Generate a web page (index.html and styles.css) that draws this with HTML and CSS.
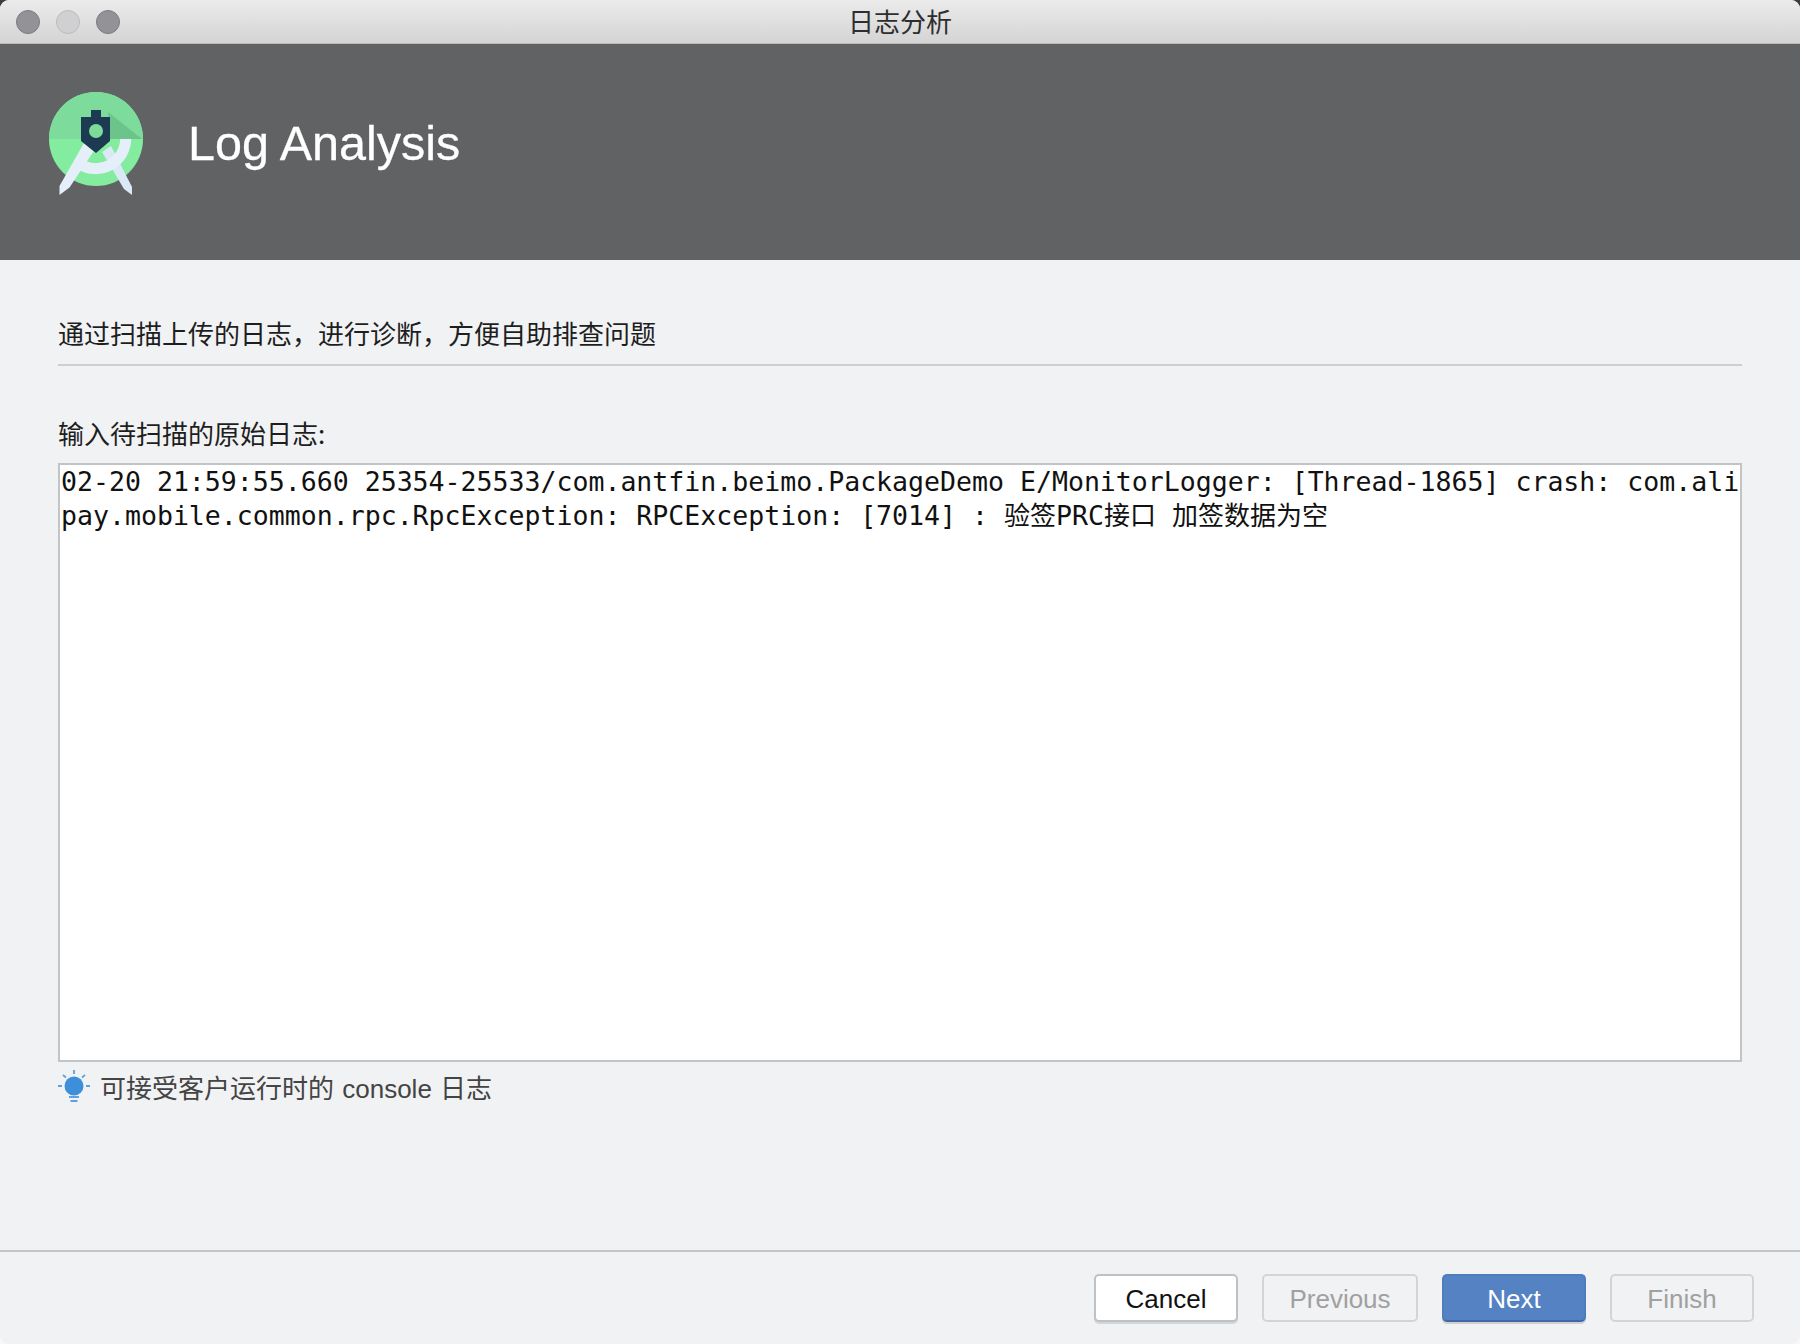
FILE: index.html
```html
<!DOCTYPE html>
<html lang="zh">
<head>
<meta charset="utf-8">
<title>日志分析</title>
<link rel="stylesheet" href="styles.css">
</head>
<body>
<div class="window">
  <div class="titlebar">
    <div class="lights">
      <span class="light"></span>
      <span class="light light-off"></span>
      <span class="light"></span>
    </div>
    <div class="window-title">日志分析</div>
  </div>
  <header class="banner">
    <svg class="logo" viewBox="40 84 112 112" width="112" height="112" aria-hidden="true">
      <circle cx="96" cy="139" r="47" fill="#84ec9f"/>
      <path d="M49 139a47 47 0 0 1 94 0z" fill="#7ddc9c"/>
      <path d="M108 112l34 27h-32z" fill="#6cc48b"/>
      <path d="M102 152l9-6 21 41v8l-8-6z" fill="#dbe8f5"/>
      <path d="M125.700 139a30 30 0 0 1-46 25" fill="none" stroke="#e4effa" stroke-width="11"/>
      <path d="M84 143l9.500 8.500-24 36-10 7.500v-9z" fill="#e4effa"/>
      <path d="M91 110h10v7h9v24l-14 12-15-12v-24h10z" fill="#1c3a52"/>
      <circle cx="96" cy="131" r="7" fill="#7ddc9c"/>
    </svg>
    <h1 class="banner-title">Log Analysis</h1>
  </header>
  <main class="content">
    <p class="intro">通过扫描上传的日志，进行诊断，方便自助排查问题</p>
    <label class="field-label">输入待扫描的原始日志:</label>
    <div class="log-box">02-20 21:59:55.660 25354-25533/com.antfin.beimo.PackageDemo E/MonitorLogger: [Thread-1865] crash: com.alipay.mobile.common.rpc.RpcException: RPCException: [7014] : <span class="cjk">验签</span>PRC<span class="cjk">接口</span> <span class="cjk">加签数据为空</span></div>
    <div class="hint">
      <svg class="bulb" viewBox="0 -3 32 40" width="32" height="40" aria-hidden="true">
        <circle cx="16" cy="17" r="9.500" fill="#3d8fd9"/>
        <path d="M16 1v4M5 6l3 2.500M27 6l-3 2.500M0 17h4M28 17h4M11 28h10M12.500 32h7" stroke="#5aa2e0" stroke-width="1.800" fill="none"/>
      </svg>
      <span>可接受客户运行时的 console 日志</span>
    </div>
  </main>
  <footer class="footer">
    <button class="btn btn-cancel">Cancel</button>
    <button class="btn btn-wide" disabled>Previous</button>
    <button class="btn btn-primary">Next</button>
    <button class="btn" disabled>Finish</button>
  </footer>
</div>
</body>
</html>
```
FILE: styles.css
```css
* { box-sizing: border-box; }
html, body { margin: 0; padding: 0; }
body {
  font-family: "Liberation Sans", "Noto Sans CJK SC", sans-serif;
  background: linear-gradient(#3c3c3c 0 30px, #f8f8f8 30px);
}
.window {
  width: 1800px;
  height: 1344px;
  display: flex;
  flex-direction: column;
  background: #f1f2f4;
  border-radius: 9px;
  overflow: hidden;
}
.titlebar {
  height: 44px;
  flex: none;
  display: flex;
  align-items: center;
  position: relative;
  background: linear-gradient(#ebebeb, #d4d4d5);
  border-bottom: 1px solid #b9b9b9;
}
.lights { display: flex; gap: 16px; padding-left: 16px; }
.light {
  width: 24px;
  height: 24px;
  border-radius: 50%;
  background: #929297;
  border: 1px solid #7b7b80;
}
.light-off { background: #d0d0d2; border-color: #bcbcbe; }
.window-title {
  position: absolute;
  inset: 0;
  text-align: center;
  font-size: 26px;
  line-height: 42px;
  color: #2e2e2e;
  font-family: "Noto Sans CJK SC", sans-serif;
}
.banner {
  height: 216px;
  flex: none;
  background: #616264;
  display: flex;
  align-items: center;
  padding: 0 0 24px 40px;
  gap: 36px;
}
.logo { flex: none; }
.banner-title {
  margin: 5px 0 0;
  font-size: 48.500px;
  font-weight: 400;
  color: #fff;
  -webkit-text-stroke: 0.3px #fff;
}
.content {
  flex: 1;
  padding: 0 58px;
  display: flex;
  flex-direction: column;
  color: #1e1e1e;
}
.intro {
  margin: 0;
  padding-top: 54px;
  height: 106px;
  font-size: 26px;
  line-height: 38px;
  font-family: "Noto Sans CJK SC", sans-serif;
  border-bottom: 2px solid #cfcfd1;
}
.field-label {
  margin-top: 48px;
  height: 49px;
  font-size: 26px;
  line-height: 38px;
  font-family: "Noto Sans CJK SC", sans-serif;
}
.log-box {
  height: 599px;
  background: #fff;
  border: 2px solid #c3c4c6;
  padding: 0 0 0 1px;
  font-family: "DejaVu Sans Mono", "Noto Sans CJK SC", monospace;
  font-size: 26.550px;
  line-height: 33.500px;
  color: #111;
  word-break: break-all;
}
.cjk {
  font-family: "Noto Sans CJK SC", sans-serif;
  font-size: 26px;
  line-height: 0;
}
.hint {
  margin-top: 3px;
  display: flex;
  align-items: center;
  gap: 10px;
  height: 42px;
  font-size: 26px;
  word-spacing: 1px;
  color: #444;
  font-family: "Liberation Sans", "Noto Sans CJK SC", sans-serif;
}
.bulb { flex: none; }
.footer {
  height: 94px;
  flex: none;
  border-top: 2px solid #c4c5c7;
  display: flex;
  justify-content: flex-end;
  gap: 24px;
  padding: 22px 46px 0 0;
}
.btn {
  width: 144px;
  height: 48px;
  border-radius: 5px;
  border: 2px solid #d3d4d6;
  background: transparent;
  font-family: "Liberation Sans", sans-serif;
  font-size: 26px;
  color: #a0a0a0;
  padding: 2px 0 0;
}
.btn-wide { width: 156px; }
.btn-cancel {
  background: #fff;
  color: #111;
  border-color: #c0c1c3;
  box-shadow: 0 2px 0 #d4d5d7;
}
.btn-primary {
  background: #5582c3;
  border-color: #4f7cbd;
  border-bottom-color: #3f69a8;
  color: #fff;
  box-shadow: 0 2px 0 #cfd0d2;
}
```
